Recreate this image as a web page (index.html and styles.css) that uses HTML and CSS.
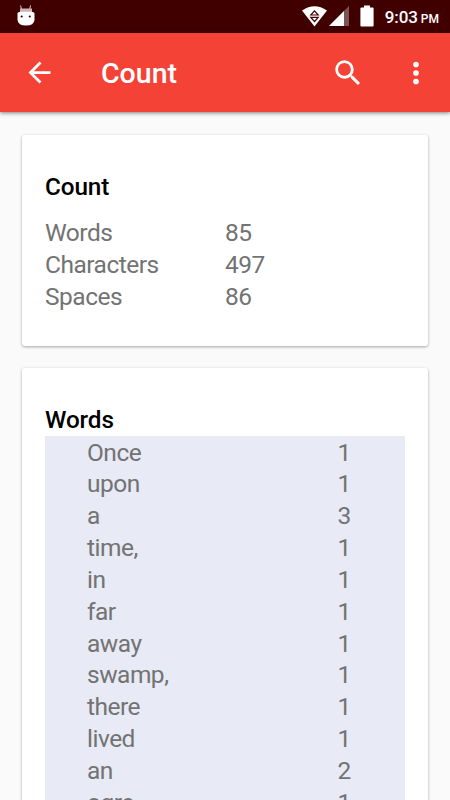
FILE: index.html
```html
<!DOCTYPE html>
<html lang="en">
<head>
    <meta charset="UTF-8">
    <meta name="viewport" content="width=device-width, initial-scale=1.0">
    <title>Count</title>
    <link rel="stylesheet" href="styles.css">
</head>
<body>
    <div class="statusbar">
        <svg class="droid" width="18" height="21" viewBox="0 0 18 21">
            <path d="M3.500 0.500L4.500 4M13.500 0.500L12.800 4" stroke="#d9c8c8" stroke-width="1"/>
            <path d="M3 3.500h12v4H3z" fill="#c9b5b5"/>
            <path d="M0.500 8.500Q1 6.800 3 6.800H15Q17 6.800 17.500 8.500V15Q17 20.500 9 20.500T0.500 15z" fill="#fff"/>
            <circle cx="4.700" cy="11.500" r="1.100" fill="#410000"/>
            <circle cx="12.800" cy="11.500" r="1.100" fill="#410000"/>
        </svg>
        <div class="system">
            <svg class="wifi" width="25" height="21" viewBox="0 0 25 21">
                <path d="M0 4.500Q12.500-4 25 4.500L12.500 20.500z" fill="#fff"/>
                <path d="M12.500 4.800L16.200 9H8.800zM12.500 15.500L16.200 11.300H8.800z" fill="#fff" stroke="#410000" stroke-width="1.200"/>
            </svg>
            <svg class="signal" width="20" height="20" viewBox="0 0 20 20">
                <path d="M20 0V20H0z" fill="#7d5353"/>
                <path d="M15 5V20H0z" fill="#fff"/>
            </svg>
            <svg class="battery" width="14" height="22" viewBox="0 0 14 22">
                <path d="M4 0.500h6v2h2.600q1 0 1 1V20.500q0 1-1 1H1.400q-1 0-1-1V3.500q0-1 1-1H4z" fill="#fff"/>
            </svg>
            <span class="time">9:03</span><span class="ampm">PM</span>
        </div>
    </div>
    <header class="toolbar">
        <svg class="back" width="33" height="33" viewBox="0 0 24 24">
            <path d="M20 11H7.830l5.590-5.590L12 4l-8 8 8 8 1.410-1.410L7.830 13H20v-2z"/>
        </svg>
        <h1>Count</h1>
        <svg class="search" width="34" height="34" viewBox="0 0 24 24">
            <path d="M15.500 14h-.790l-.280-.270A6.471 6.471 0 0 0 16 9.500 6.500 6.500 0 1 0 9.500 16c1.610 0 3.090-.590 4.230-1.570l.270.280v.790l5 4.990L20.490 19l-4.990-5zm-6 0C7.010 14 5 11.990 5 9.500S7.010 5 9.500 5 14 7.010 14 9.500 11.990 14 9.500 14z"/>
        </svg>
        <svg class="more" width="34" height="34" viewBox="0 0 24 24">
            <circle cx="12" cy="6" r="2"/>
            <circle cx="12" cy="12" r="2"/>
            <circle cx="12" cy="18" r="2"/>
        </svg>
    </header>
    <main>
        <section class="card">
            <h2>Count</h2>
            <div class="totals">
                <span>Words</span><span>85</span>
                <span>Characters</span><span>497</span>
                <span>Spaces</span><span>86</span>
            </div>
        </section>
        <section class="card">
            <h2>Words</h2>
            <div class="wordlist">
                <span>Once</span><span>1</span>
                <span>upon</span><span>1</span>
                <span>a</span><span>3</span>
                <span>time,</span><span>1</span>
                <span>in</span><span>1</span>
                <span>far</span><span>1</span>
                <span>away</span><span>1</span>
                <span>swamp,</span><span>1</span>
                <span>there</span><span>1</span>
                <span>lived</span><span>1</span>
                <span>an</span><span>2</span>
                <span>ogre</span><span>1</span>
            </div>
        </section>
    </main>
</body>
</html>
```
FILE: styles.css
```css
* {
    box-sizing: border-box;
}
body {
    margin: 0;
    height: 800px;
    overflow: hidden;
    display: flex;
    flex-direction: column;
    background: #fafafa;
    font-family: Roboto, sans-serif;
    color: #737373;
}
svg {
    display: block;
    flex: none;
}
.statusbar {
    flex: none;
    height: 33px;
    background: #410000;
    display: flex;
    justify-content: space-between;
    padding: 5px 11px 0 16.5px;
}
.system {
    display: flex;
    color: #fff;
    font-weight: 500;
    line-height: 25px;
}
.wifi {
    margin-top: 1px;
}
.signal {
    margin: 1px 11px 0 2px;
}
.battery {
    margin-right: 10.5px;
}
.time {
    font-size: 17px;
    letter-spacing: -0.1px;
}
.ampm {
    font-size: 12px;
    margin-left: 3px;
    line-height: 28px;
}
.toolbar {
    flex: none;
    height: 79px;
    background: #f44336;
    display: flex;
    align-items: center;
    padding: 0 17px 0 23px;
    box-shadow: 0 1px 4px rgba(0, 0, 0, 0.5);
    position: relative;
}
.toolbar svg {
    fill: #fff;
}
.toolbar h1 {
    flex: 1;
    margin: 2px 0 0 45px;
    font-size: 28.5px;
    font-weight: 500;
    color: #fff;
}
.more {
    margin-left: 34px;
}
main {
    padding: 23px 22.5px 0 22px;
}
.card {
    background: #fff;
    border-radius: 3px;
    padding: 35px 22.5px 33px 23px;
    margin-bottom: 22px;
    box-shadow: 0 1px 3px rgba(0, 0, 0, 0.35);
}
.card h2 {
    margin: 0;
    font-size: 24.3px;
    letter-spacing: -0.1px;
    font-weight: 500;
    line-height: 33px;
    color: #000;
}
.totals,
.wordlist {
    display: grid;
    grid-auto-rows: 31.85px;
    font-size: 24.5px;
    letter-spacing: -0.5px;
    line-height: 32px;
}
.totals {
    grid-template-columns: 180px 1fr;
    margin-top: 14px;
}
.wordlist {
    grid-template-columns: 250.5px 1fr;
    padding: 1px 0 0 42px;
    background: #e8eaf6;
}
```
